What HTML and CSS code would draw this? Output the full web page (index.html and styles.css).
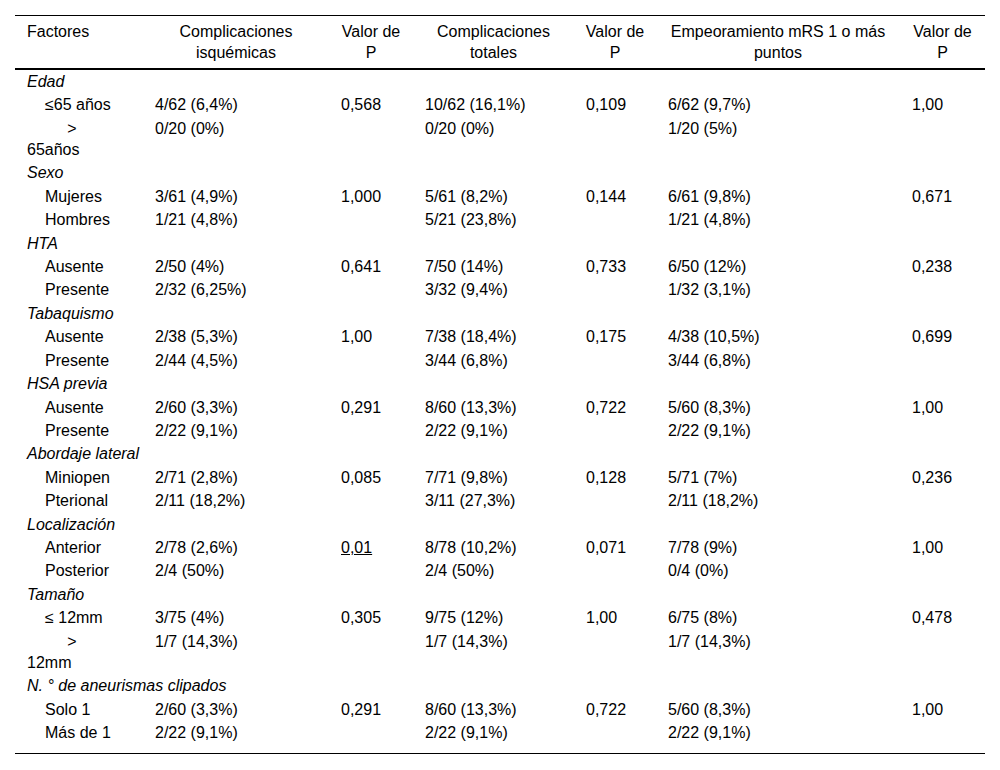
FILE: index.html
```html
<!DOCTYPE html>
<html lang="es">
<head>
<meta charset="utf-8">
<title>Tabla</title>
<link rel="stylesheet" href="styles.css">
</head>
<body>
<table class="data">
  <colgroup>
    <col class="c1"><col class="c2"><col class="c3"><col class="c4"><col class="c5"><col class="c6"><col class="c7">
  </colgroup>
  <thead>
    <tr>
      <th class="left">Factores</th>
      <th>Complicaciones isquémicas</th>
      <th>Valor de P</th>
      <th>Complicaciones totales</th>
      <th>Valor de P</th>
      <th>Empeoramiento mRS 1 o más puntos</th>
      <th>Valor de P</th>
    </tr>
  </thead>
  <tbody>
    <tr><td class="group" colspan="7">Edad</td></tr>
    <tr><td class="sub">≤65 años</td><td>4/62 (6,4%)</td><td>0,568</td><td>10/62 (16,1%)</td><td>0,109</td><td>6/62 (9,7%)</td><td>1,00</td></tr>
    <tr><td class="sub">&nbsp;&nbsp;&nbsp;&nbsp;&nbsp;&gt;<br>65años</td><td>0/20 (0%)</td><td></td><td>0/20 (0%)</td><td></td><td>1/20 (5%)</td><td></td></tr>
    <tr><td class="group" colspan="7">Sexo</td></tr>
    <tr><td class="sub">Mujeres</td><td>3/61 (4,9%)</td><td>1,000</td><td>5/61 (8,2%)</td><td>0,144</td><td>6/61 (9,8%)</td><td>0,671</td></tr>
    <tr><td class="sub">Hombres</td><td>1/21 (4,8%)</td><td></td><td>5/21 (23,8%)</td><td></td><td>1/21 (4,8%)</td><td></td></tr>
    <tr><td class="group" colspan="7">HTA</td></tr>
    <tr><td class="sub">Ausente</td><td>2/50 (4%)</td><td>0,641</td><td>7/50 (14%)</td><td>0,733</td><td>6/50 (12%)</td><td>0,238</td></tr>
    <tr><td class="sub">Presente</td><td>2/32 (6,25%)</td><td></td><td>3/32 (9,4%)</td><td></td><td>1/32 (3,1%)</td><td></td></tr>
    <tr><td class="group" colspan="7">Tabaquismo</td></tr>
    <tr><td class="sub">Ausente</td><td>2/38 (5,3%)</td><td>1,00</td><td>7/38 (18,4%)</td><td>0,175</td><td>4/38 (10,5%)</td><td>0,699</td></tr>
    <tr><td class="sub">Presente</td><td>2/44 (4,5%)</td><td></td><td>3/44 (6,8%)</td><td></td><td>3/44 (6,8%)</td><td></td></tr>
    <tr><td class="group" colspan="7">HSA previa</td></tr>
    <tr><td class="sub">Ausente</td><td>2/60 (3,3%)</td><td>0,291</td><td>8/60 (13,3%)</td><td>0,722</td><td>5/60 (8,3%)</td><td>1,00</td></tr>
    <tr><td class="sub">Presente</td><td>2/22 (9,1%)</td><td></td><td>2/22 (9,1%)</td><td></td><td>2/22 (9,1%)</td><td></td></tr>
    <tr><td class="group" colspan="7">Abordaje lateral</td></tr>
    <tr><td class="sub">Miniopen</td><td>2/71 (2,8%)</td><td>0,085</td><td>7/71 (9,8%)</td><td>0,128</td><td>5/71 (7%)</td><td>0,236</td></tr>
    <tr><td class="sub">Pterional</td><td>2/11 (18,2%)</td><td></td><td>3/11 (27,3%)</td><td></td><td>2/11 (18,2%)</td><td></td></tr>
    <tr><td class="group" colspan="7">Localización</td></tr>
    <tr><td class="sub">Anterior</td><td>2/78 (2,6%)</td><td><span class="sig">0,01</span></td><td>8/78 (10,2%)</td><td>0,071</td><td>7/78 (9%)</td><td>1,00</td></tr>
    <tr><td class="sub">Posterior</td><td>2/4 (50%)</td><td></td><td>2/4 (50%)</td><td></td><td>0/4 (0%)</td><td></td></tr>
    <tr><td class="group" colspan="7">Tamaño</td></tr>
    <tr><td class="sub">≤ 12mm</td><td>3/75 (4%)</td><td>0,305</td><td>9/75 (12%)</td><td>1,00</td><td>6/75 (8%)</td><td>0,478</td></tr>
    <tr><td class="sub">&nbsp;&nbsp;&nbsp;&nbsp;&nbsp;&gt;<br>12mm</td><td>1/7 (14,3%)</td><td></td><td>1/7 (14,3%)</td><td></td><td>1/7 (14,3%)</td><td></td></tr>
    <tr><td class="group" colspan="7">N. ° de aneurismas clipados</td></tr>
    <tr><td class="sub">Solo 1</td><td>2/60 (3,3%)</td><td>0,291</td><td>8/60 (13,3%)</td><td>0,722</td><td>5/60 (8,3%)</td><td>1,00</td></tr>
    <tr class="last"><td class="sub">Más de 1</td><td>2/22 (9,1%)</td><td></td><td>2/22 (9,1%)</td><td></td><td>2/22 (9,1%)</td><td></td></tr>
  </tbody>
</table>
</body>
</html>
```
FILE: styles.css
```css
html, body {
  margin: 0;
  padding: 0;
  background: #fff;
}

body {
  font-family: "Liberation Sans", Arial, sans-serif;
  font-size: 16px;
  color: #000;
  padding: 15px;
}

.data {
  width: 970px;
  table-layout: fixed;
  border-collapse: collapse;
  line-height: 21.4px;
  border-top: 1px solid #000;
  border-bottom: 1px solid #000;
}

.c1 { width: 128px; }
.c2 { width: 186px; }
.c3 { width: 84px; }
.c4 { width: 161px; }
.c5 { width: 82px; }
.c6 { width: 244px; }
.c7 { width: 85px; }

.data th {
  font-weight: normal;
  text-align: center;
  vertical-align: top;
  padding: 5px 10px 4px;
  border-bottom: 2px solid #000;
}

.data th.left {
  text-align: left;
  padding-left: 12px;
}

.data td {
  text-align: left;
  vertical-align: top;
  padding: 1px 12px;
}

.data td.group {
  font-style: italic;
}

.data td.sub {
  text-indent: 18px;
}

.data tr.last td {
  padding-bottom: 9px;
}

.sig {
  text-decoration: underline;
}
```
